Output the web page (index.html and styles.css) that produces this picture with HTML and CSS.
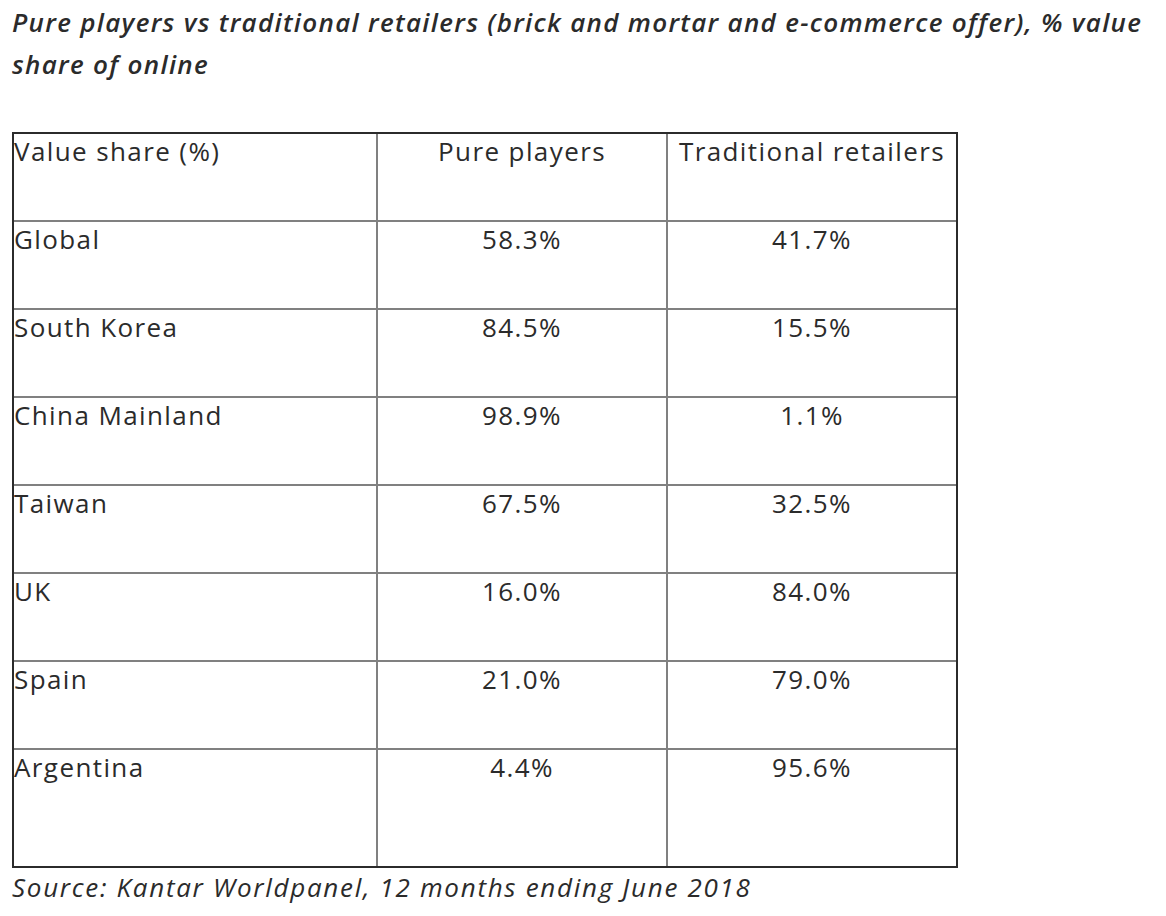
FILE: index.html
```html
<!DOCTYPE html>
<html lang="en">
<head>
<meta charset="utf-8">
<title>Pure players vs traditional retailers</title>
<link rel="stylesheet" href="styles.css">
</head>
<body>
<h2 class="title">Pure players vs traditional retailers (brick and mortar and e-commerce offer), % value share of online</h2>
<table class="share-table">
  <colgroup>
    <col class="col-country">
    <col class="col-pure">
    <col class="col-trad">
  </colgroup>
  <tr>
    <td>Value share (%)</td>
    <td class="num">Pure players</td>
    <td class="num">Traditional retailers</td>
  </tr>
  <tr><td>Global</td><td class="num">58.3%</td><td class="num">41.7%</td></tr>
  <tr><td>South Korea</td><td class="num">84.5%</td><td class="num">15.5%</td></tr>
  <tr><td>China Mainland</td><td class="num">98.9%</td><td class="num">1.1%</td></tr>
  <tr><td>Taiwan</td><td class="num">67.5%</td><td class="num">32.5%</td></tr>
  <tr><td>UK</td><td class="num">16.0%</td><td class="num">84.0%</td></tr>
  <tr><td>Spain</td><td class="num">21.0%</td><td class="num">79.0%</td></tr>
  <tr class="last"><td>Argentina</td><td class="num">4.4%</td><td class="num">95.6%</td></tr>
</table>
<p class="source">Source: Kantar Worldpanel, 12 months ending June 2018</p>
</body>
</html>
```

FILE: styles.css
```css
html, body {
  background: #ffffff;
}
body {
  margin: 0;
  padding: 0 12px;
  color: #2b2b2b;
  font-family: "Open Sans", Lato, "Liberation Sans", sans-serif;
}
.title {
  margin: 0;
  padding: 1px 0 0 0;
  height: 132px;
  box-sizing: border-box;
  font-size: 26px;
  line-height: 42px;
  font-weight: 600;
  font-style: italic;
  letter-spacing: 1.3px;
}
.share-table {
  table-layout: fixed;
  width: 946px;
  border-collapse: separate;
  border-spacing: 0;
  border: 2px solid #2b2b2b;
  font-size: 26px;
  line-height: 34px;
  letter-spacing: 1.4px;
}
.col-country { width: 364px; }
.col-pure { width: 290px; }
.col-trad { width: 288px; }
.share-table td {
  height: 86px;
  padding: 0;
  vertical-align: top;
  text-align: left;
  border-right: 2px solid #808080;
  border-bottom: 2px solid #808080;
}
.share-table td:last-child {
  border-right: none;
}
.share-table td.num {
  text-align: center;
}
.share-table tr.last td {
  height: 116px;
  border-bottom: none;
}
.source {
  margin: 0;
  padding-top: 2px;
  font-size: 26px;
  line-height: 34px;
  font-style: italic;
  font-weight: 500;
  letter-spacing: 1.7px;
}
```
